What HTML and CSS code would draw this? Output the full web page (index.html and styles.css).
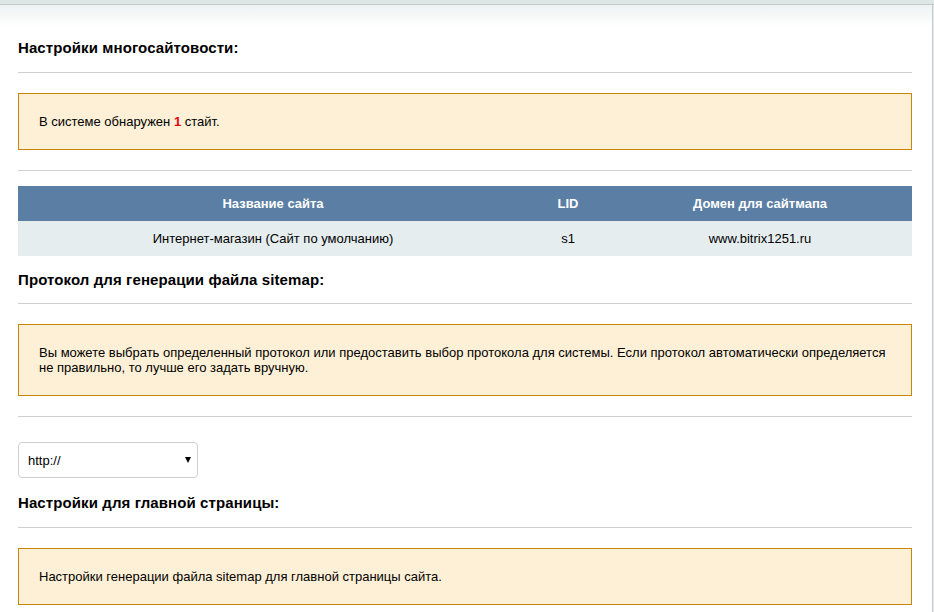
FILE: index.html
```
<!DOCTYPE html>
<html lang="ru">
<head>
<meta charset="utf-8">
<title>Настройки</title>
<link rel="stylesheet" href="styles.css">
</head>
<body>
<div class="topbar"></div>
<div class="panel">
  <h2 class="title first">Настройки многосайтовости:</h2>
  <div class="sep"></div>
  <div class="note">В системе обнаружен <b class="num">1</b> стайт.</div>
  <div class="sep"></div>
  <table class="sites">
    <thead>
      <tr><th class="c1">Название сайта</th><th class="c2">LID</th><th class="c3">Домен для сайтмапа</th></tr>
    </thead>
    <tbody>
      <tr><td>Интернет-магазин (Сайт по умолчанию)</td><td>s1</td><td>www.bitrix1251.ru</td></tr>
    </tbody>
  </table>
  <h2 class="title">Протокол для генерации файла sitemap:</h2>
  <div class="sep sep-tight"></div>
  <div class="note">Вы можете выбрать определенный протокол или предоставить выбор протокола для системы. Если протокол автоматически определяется не правильно, то лучше его задать вручную.</div>
  <div class="sep"></div>
  <div class="select-wrap">
    <select class="select">
      <option>http://</option>
      <option>https://</option>
    </select>
  </div>
  <h2 class="title">Настройки для главной страницы:</h2>
  <div class="sep"></div>
  <div class="note">Настройки генерации файла sitemap для главной страницы сайта.</div>
</div>
</body>
</html>
```
FILE: styles.css
```
html, body {
  margin: 0;
  padding: 0;
}
body {
  background: #e4eaea;
  font-family: "Liberation Sans", Arial, sans-serif;
  font-size: 13px;
  color: #000;
  overflow: hidden;
  height: 612px;
}
.topbar {
  height: 4px;
  background: #dfe6e6;
  border-bottom: 1px solid #c3c8c8;
}
.panel {
  margin-right: 1px;
  border-right: 1px solid #c5c9c9;
  background: linear-gradient(to bottom, #eef2f2 0, #ffffff 22px);
  padding: 34px 20px 40px 18px;
  min-height: 700px;
}
.title {
  margin: 0;
  font-size: 15px;
  line-height: 18px;
  font-weight: bold;
  letter-spacing: 0.1px;
  color: #000;
}
.title + .sep {
  margin-top: 15px;
}
.title + .sep.sep-tight {
  margin-top: 14px;
}
.sep {
  height: 1px;
  background: #d0d0d0;
  margin-top: 20px;
}
.note {
  margin-top: 20px;
  border: 1px solid #c7850a;
  background: #fef0d6;
  padding: 20px 20px;
  line-height: 15px;
}
.num {
  color: #e8000d;
}
.sites {
  width: 100%;
  border-collapse: collapse;
  margin-top: 15px;
}
.sites th {
  background: #5a7ea4;
  color: #fff;
  font-weight: bold;
  height: 35px;
  padding: 0;
  text-align: center;
}
.sites td {
  background: #e5edef;
  height: 35px;
  padding: 0;
  text-align: center;
}
.sites .c1 { width: 510px; }
.sites .c2 { width: 80px; }
.sites + .title {
  margin-top: 15px;
}
.select-wrap {
  position: relative;
  width: 180px;
  margin-top: 25px;
}
.select-wrap::after {
  content: "";
  position: absolute;
  right: 7px;
  top: 15px;
  border-left: 3px solid transparent;
  border-right: 3px solid transparent;
  border-top: 6px solid #000;
}
.select {
  -webkit-appearance: none;
  appearance: none;
  display: block;
  width: 180px;
  height: 36px;
  border: 1px solid #cfcfcf;
  border-radius: 4px;
  background: #fff;
  font-family: "Liberation Sans", Arial, sans-serif;
  font-size: 13px;
  color: #000;
  padding: 0 9px;
}
.select-wrap + .title {
  margin-top: 16px;
}
```
